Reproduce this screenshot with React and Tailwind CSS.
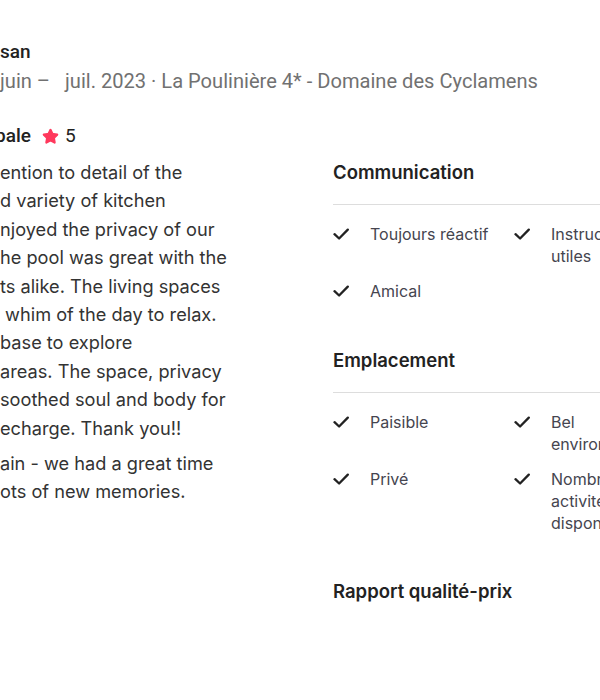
import { Star } from 'lucide-react'

const communication = [
  ['Toujours réactif', 'Instructions utiles'],
  ['Amical'],
]

const emplacement = [
  ['Paisible', 'Bel environnement'],
  ['Privé', 'Nombreuses activités disponibles'],
]

function Check() {
  return (
    <svg viewBox="0 0 16 16" className="h-[16px] w-[16px] shrink-0 mt-[3px]" fill="none" stroke="#222222" strokeWidth="2.3" strokeLinecap="round" strokeLinejoin="round">
      <path d="M1.5 8.2l4.6 4.3L14.8 3.6" />
    </svg>
  )
}

function Item({ label }) {
  return (
    <div className="flex items-start gap-[21px] w-[181px]">
      <Check />
      <span className="w-[132px] text-[16px] leading-[22px] text-[#45454f]">{label}</span>
    </div>
  )
}

function Section({ title, rows, first }) {
  return (
    <div className={first ? 'mt-[2px]' : 'mt-[46px]'}>
      <h3 className="text-[18.5px] leading-[24px] font-semibold text-[#222222]">{title}</h3>
      <div className="mt-[20px] h-px bg-[#dddddd]" />
      <div className="mt-[18px] flex flex-col gap-[13px]">
        {rows.map((r, i) => (
          <div key={i} className="flex">
            {r.map(l => <Item key={l} label={l} />)}
          </div>
        ))}
      </div>
    </div>
  )
}

const para1 = [
  'ention to detail of the',
  'd variety of kitchen',
  'njoyed the privacy of our',
  'he pool was great with the',
  'ts alike. The living spaces',
  ' whim of the day to relax.',
  'base to explore',
  'areas. The space, privacy',
  'soothed soul and body for',
  'echarge. Thank you!!',
]

const para2 = ['ain - we had a great time', 'ots of new memories.']

export default function App() {
  return (
    <div className="h-[700px] w-[600px] overflow-hidden bg-white font-['Inter',sans-serif] text-[#222222]">
      <div className="pt-[40px]">
        {/* Reviewer */}
        <div className="font-['Roboto',sans-serif] text-[19px] leading-[24px] font-medium">san</div>
        <div className="mt-[4px] whitespace-pre font-['Roboto',sans-serif] text-[20.1px] leading-[26px] text-[#717171]">
          {'juin –   juil. 2023 · La Poulinière 4* - Domaine des Cyclamens'}
        </div>

        {/* Rating */}
        <div className="mt-[30px] flex items-center font-['Roboto',sans-serif] text-[19px] leading-[24px]">
          <span className="-ml-[5px] font-medium">pale</span>
          <Star size={17} className="ml-[11px] fill-[#ff385c] text-[#ff385c]" />
          <span className="ml-[6px]">5</span>
        </div>

        <div className="mt-[10px] flex">
          {/* Review text */}
          <div className="w-[333px] shrink-0 whitespace-pre text-[18.2px] leading-[28.4px] text-[#333333]">
            <p>{para1.join('\n')}</p>
            <p className="mt-[7px]">{para2.join('\n')}</p>
          </div>

          {/* Category highlights */}
          <div className="flex-1">
            <Section title="Communication" rows={communication} first />
            <Section title="Emplacement" rows={emplacement} />
            <h3 className="mt-[45px] text-[18.5px] leading-[24px] font-semibold text-[#222222]">Rapport qualité-prix</h3>
          </div>
        </div>
      </div>
    </div>
  )
}
